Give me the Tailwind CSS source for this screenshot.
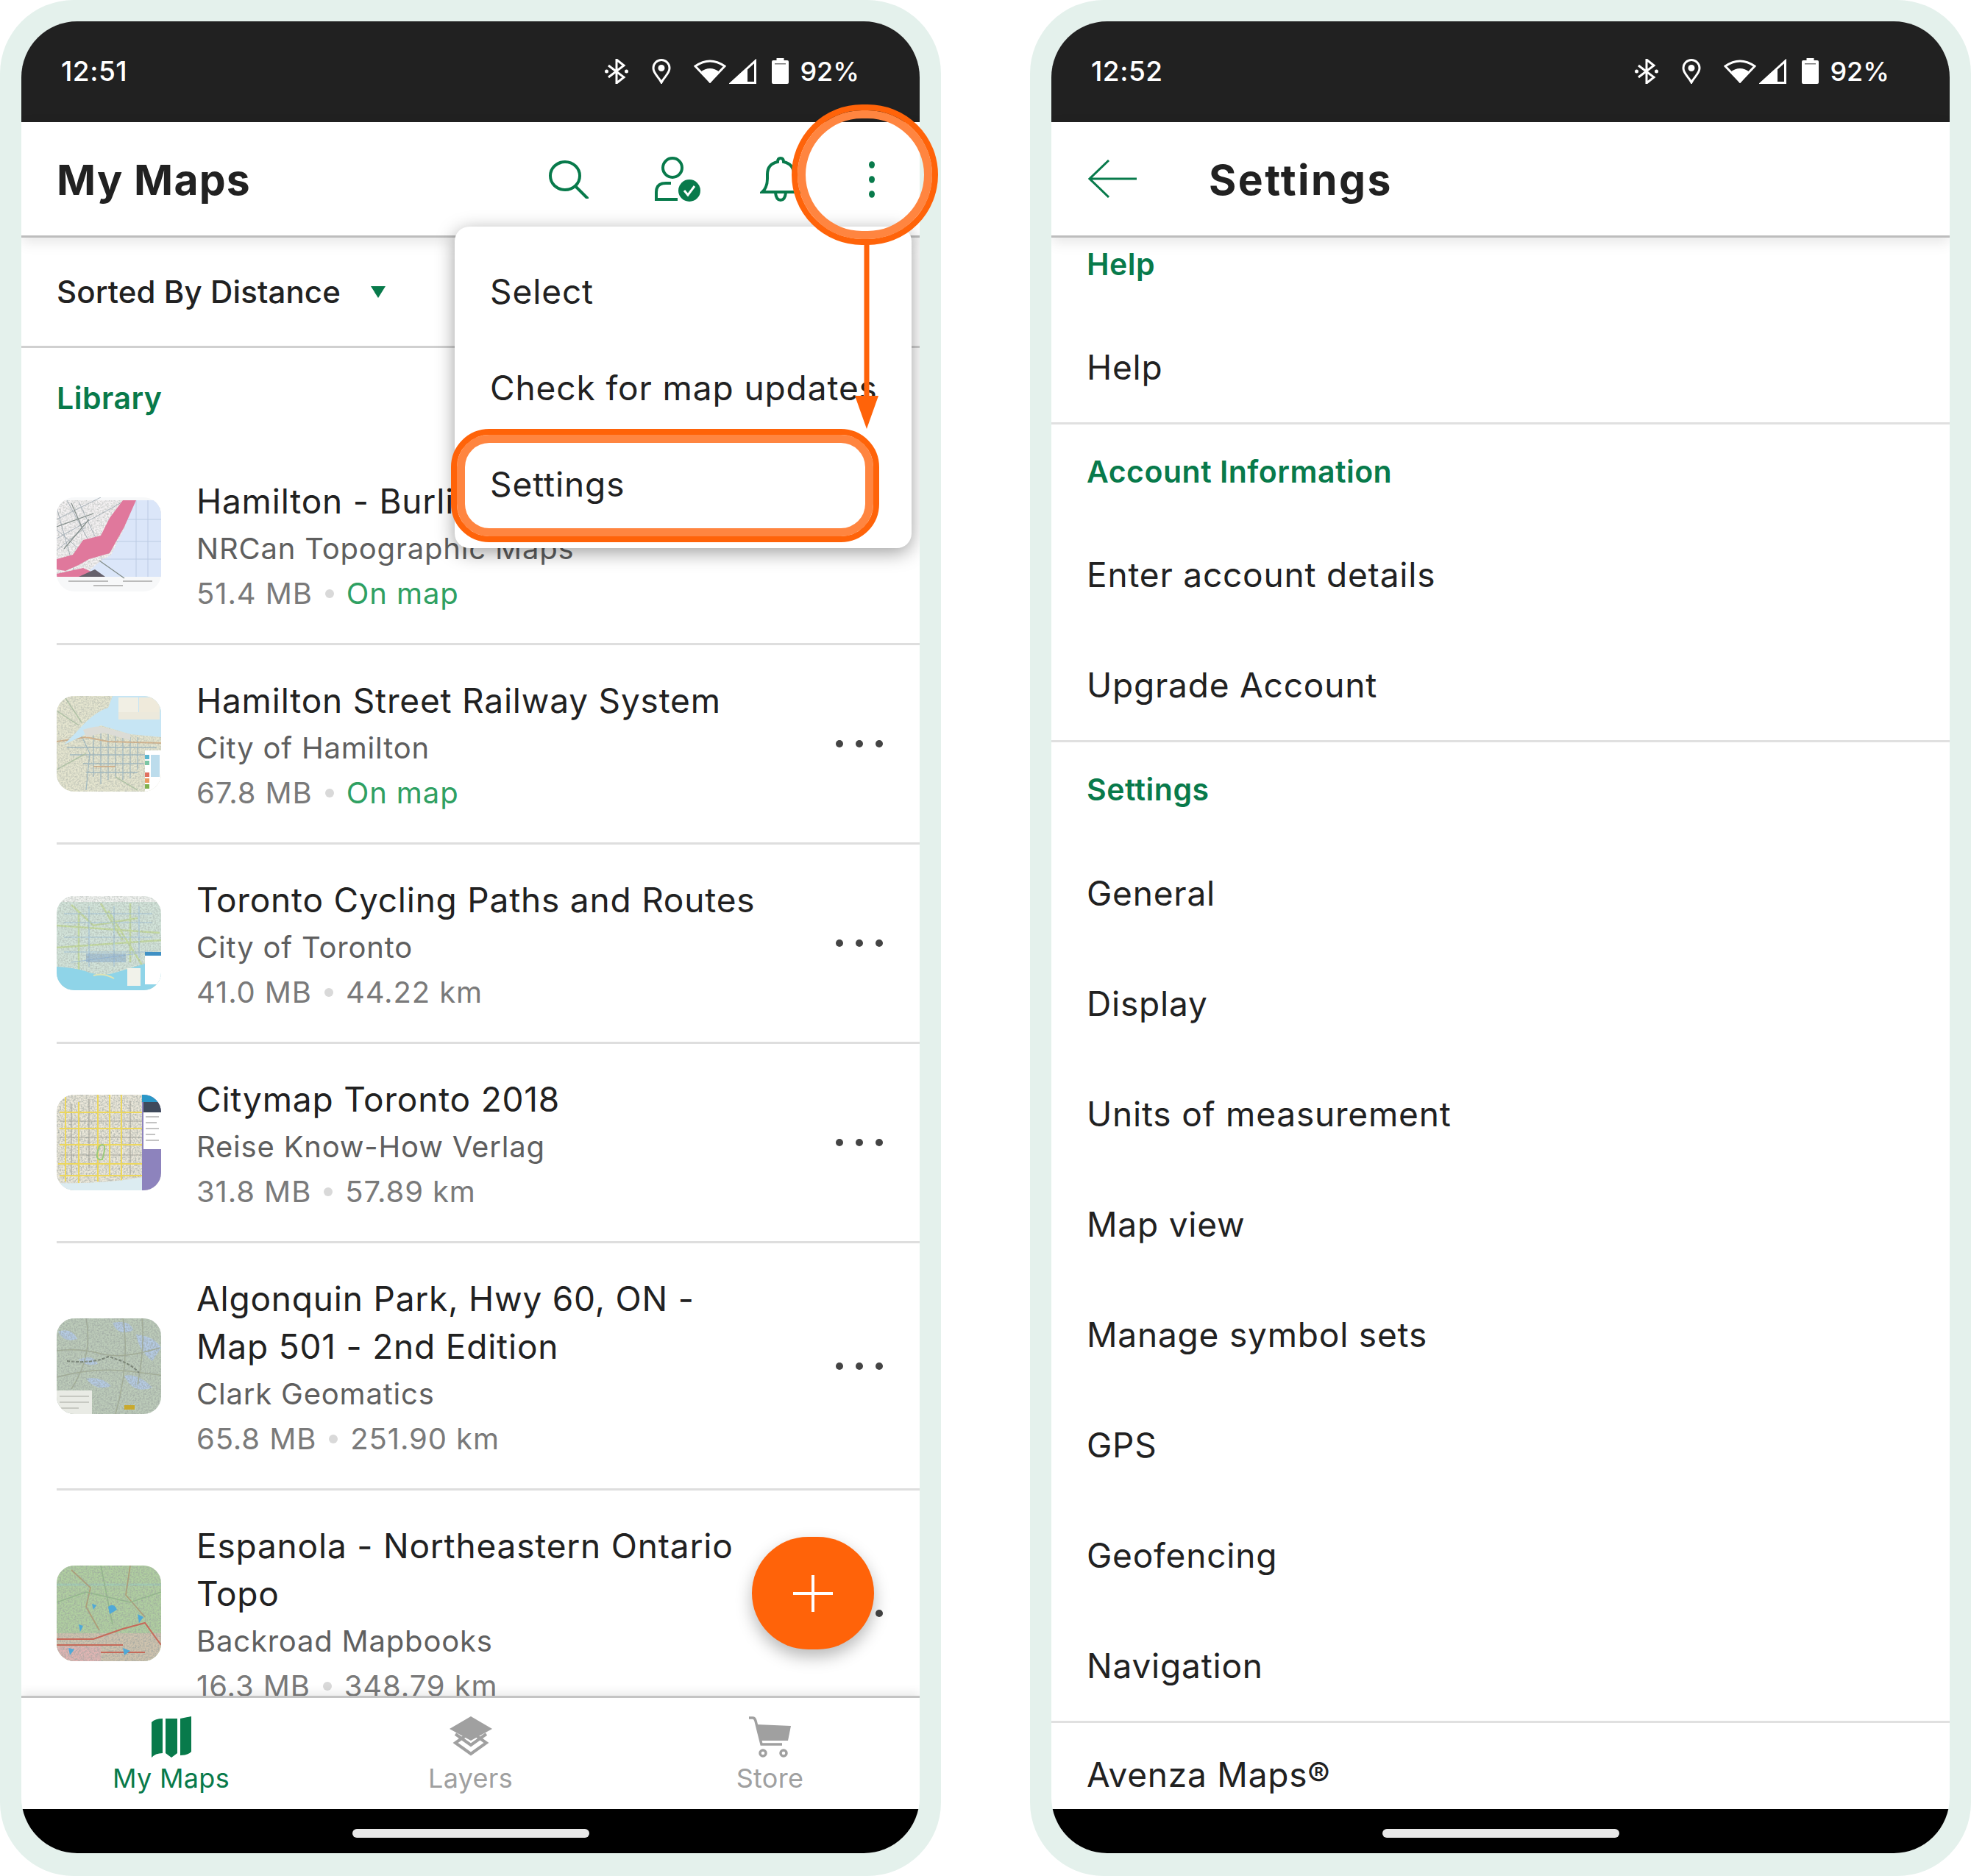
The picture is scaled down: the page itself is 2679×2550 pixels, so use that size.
<!doctype html>
<html lang="en">
<head>
<meta charset="utf-8">
<script src="https://cdn.jsdelivr.net/npm/@tailwindcss/browser@4"></script>
<title>My Maps and Settings</title>
</head>
<body class="bg-white m-0">
<svg class="absolute w-0 h-0" aria-hidden="true"><filter id="n" x="0" y="0" width="100%" height="100%"><feTurbulence type="fractalNoise" baseFrequency="0.45" numOctaves="2" seed="4"/><feColorMatrix values="0 0 0 0 .32  0 0 0 0 .36  0 0 0 0 .34  1.6 0 0 0 -0.58"/></filter></svg>
<div class="w-[2679px] h-[2550px] flex justify-between font-['Inter','Noto_Sans',sans-serif] text-[#212121] overflow-hidden bg-white">

  <!-- LEFT PHONE -->
  <div class="relative w-[1279px] h-[2550px] rounded-[100px] bg-[#e4f1ec] p-[29px] shrink-0">
    <div class="relative w-[1221px] h-[2490px] rounded-[76px] overflow-hidden flex flex-col bg-white">
      <!-- status -->
      <div class="h-[137px] shrink-0 bg-[#212121] flex items-center pl-[54px] pr-[82px] pb-[2px] text-white text-[37px] font-medium tracking-[0.5px]">
        <span>12:51</span>
        <div class="ml-auto flex items-center">
          <svg class="w-[32px] h-[34px]" viewBox="0 0 32 34" fill="none" stroke="#fff" stroke-width="3"><path d="M5 9 L26 25 L16 33 V1 L26 9 L5 25"/><circle cx="2.5" cy="17" r="2.5" fill="#fff" stroke="none"/><circle cx="29.5" cy="17" r="2.5" fill="#fff" stroke="none"/></svg>
          <svg class="w-[26px] h-[34px] ml-[32px]" viewBox="0 0 26 34" fill="none" stroke="#fff" stroke-width="3"><path d="M13 32 C9 24 2 20 2 12.500 A11 11 0 0 1 24 12.500 C24 20 17 24 13 32Z"/><circle cx="13" cy="12.500" r="4.500" fill="#fff" stroke="none"/></svg>
          <svg class="w-[44px] h-[34px] ml-[31px]" viewBox="0 0 44 34" fill="none" stroke="#fff" stroke-width="3"><path d="M22 31 L2 10 Q22 -4 42 10Z"/><path d="M22 33 L9 18 Q22 8 35 18Z" fill="#fff" stroke="none"/></svg>
          <svg class="w-[37px] h-[34px] ml-[4px]" viewBox="0 0 37 34" fill="none" stroke="#fff" stroke-width="3"><path d="M3 32.500 L35.500 3 V32.500Z"/><path d="M0 34 L25 11 V34Z" fill="#fff" stroke="none"/></svg>
          <svg class="w-[23px] h-[35px] ml-[21px]" viewBox="0 0 23 35"><path d="M6.500 0 H16.500 V3 H21 Q23 3 23 5 V33 Q23 35 21 35 H2 Q0 35 0 33 V5 Q0 3 2 3 H6.500Z" fill="#fff"/><rect x="4" y="7" width="15" height="1.500" fill="#777"/></svg>
          <span class="ml-[15px] text-[36px] tracking-normal">92%</span>
        </div>
      </div>
      <!-- header -->
      <div class="relative z-10 h-[157px] shrink-0 bg-white border-b-[3px] border-[#bdbdbd] shadow-[0_6px_18px_rgba(0,0,0,0.10)] flex items-center pl-[48px]">
        <h1 class="pt-[2px] text-[57px] font-bold tracking-[1.200px] leading-none">My Maps</h1>
        <svg class="absolute left-[716px] top-[52px] w-[56px] h-[52px]" viewBox="0 0 56 52" fill="none" stroke="#087a4b" stroke-width="4" stroke-linecap="round"><ellipse cx="23" cy="21" rx="20" ry="19"/><path d="M37 35 L53 51"/></svg>
        <svg class="absolute left-[860px] top-[47px] w-[64px] h-[62px]" viewBox="0 0 64 62" fill="none" stroke="#087a4b" stroke-width="4"><circle cx="25" cy="15" r="13"/><path d="M23 36 H16 Q3 36 3 48 V58 H32"/><circle cx="48" cy="46" r="15" fill="#087a4b" stroke="none"/><path d="M41 46 L46 52 L55 40" stroke="#fff" stroke-width="3"/></svg>
        <svg class="absolute left-[1004px] top-[47px] w-[56px] h-[62px]" viewBox="0 0 56 62" fill="none" stroke="#087a4b" stroke-width="4"><path d="M3 48 Q10 42 10 30 V24 Q10 10 24 7 Q24 2 28 2 Q32 2 32 7 Q46 10 46 24 V30 Q46 42 53 48 Z"/><path d="M21 49 Q22 59 28 59 Q34 59 35 49"/></svg>
        <svg class="absolute left-[1150px] top-[52px] w-[12px] h-[52px]" viewBox="0 0 12 52" fill="#087a4b"><ellipse cx="6" cy="6" rx="4" ry="4.800"/><ellipse cx="6" cy="26" rx="4" ry="4.800"/><ellipse cx="6" cy="46" rx="4" ry="4.800"/></svg>
      </div>
      <!-- content -->
      <div class="flex-1 min-h-0 overflow-hidden">
        <div class="h-[150px] border-b-[3px] border-[#d0d0d0] flex items-center pl-[48px] text-[42px] font-medium tracking-[0.1px]">
          <span>Sorted By Distance</span>
          <svg class="ml-[41px] w-[20px] h-[16px]" viewBox="0 0 20 16"><path d="M0 0 H20 L10 16Z" fill="#087a4b"/></svg>
        </div>
        <div class="h-[133px] flex items-center pl-[48px] pt-[5px] text-[41px] font-semibold text-[#087a4b] tracking-[0.5px]">Library</div>

        <div class="ml-[48px]">
          <!-- row 1 -->
          <div class="flex items-center border-b-[3px] border-[#dedede]">
            <svg class="w-[142px] h-[128px] shrink-0 rounded-[24px]" viewBox="0 0 142 128" preserveAspectRatio="none">
              <rect width="142" height="128" fill="#f7f8f9"/><rect y="4" width="142" height="104" fill="#f5f2f3"/>
              <path d="M0 30 L60 0 M0 56 L90 6 M0 14 L24 100 M30 6 L60 70 M0 72 L40 40 M14 4 L44 60 M0 44 L30 70" stroke="#aab4bd" stroke-width="1" fill="none"/>
              <path d="M0 40 L50 22 M10 70 L44 30 M20 8 L34 40" stroke="#7f8a87" stroke-width="1.200" fill="none"/>
              <rect y="4" width="142" height="104" filter="url(#n)" opacity=".7"/>
              <path d="M106 4 H142 V108 H34 L58 88 L74 78 L92 42Z" fill="#dbe6f9"/>
              <path d="M108 4V108 M124 4V108 M70 30H142 M60 60H142 M60 84H142" stroke="#bccbe4" stroke-width="1" fill="none"/>
              <path d="M90 4 H108 L92 40 L72 76 L44 84 L30 92 L12 100 L0 98 V84 L22 78 L36 58 L60 52 L72 28Z" fill="#e0789c"/>
              <path d="M0 104 L36 96 L62 108 H0Z" fill="#e0789c"/><path d="M30 108 L52 98 L66 108Z" fill="#66616c"/>
              <path d="M58 86 L92 110" stroke="#7f8a87" stroke-width="1.200"/>
              <path d="M16 114 H70 M90 114 H130 M50 120 H90" stroke="#bbb" stroke-width="2"/>
            </svg>
            <div class="ml-[48px] w-[772px] pt-[43px] pb-[38px]">
              <div class="text-[46px] leading-[65px] tracking-[0.8px]">Hamilton - Burlington</div>
              <div class="text-[40px] leading-[63px] text-[#5f5f5f] tracking-[0.8px]">NRCan Topographic Maps</div>
              <div class="text-[40px] leading-[59px] text-[#7a7a7a] tracking-[0.9px] flex items-center"><span>51.4 MB</span><span class="w-[12px] h-[12px] rounded-full bg-[#d9d9d9] mx-[17px]"></span><span class="text-[#2fa062]">On map</span></div>
            </div>
            <svg class="ml-auto mr-[50px] w-[64px] h-[10px] shrink-0" viewBox="0 0 64 10" fill="#444"><circle cx="5" cy="5" r="5"/><circle cx="32" cy="5" r="5"/><circle cx="59" cy="5" r="5"/></svg>
          </div>
          <!-- row 2 -->
          <div class="flex items-center border-b-[3px] border-[#dedede]">
            <svg class="w-[142px] h-[130px] shrink-0 rounded-[24px]" viewBox="0 0 142 130" preserveAspectRatio="none">
              <rect width="142" height="130" fill="#e6e6d0"/>
              <path d="M60 42 V120 M70 46 V114 M80 48 V110 M90 50 V114 M100 56 V112 M110 56 V100 M50 50 V110 M14 70 H136 M18 80 H120 M36 92 H118 M40 104 H110 M30 46 L45 78 L40 128" stroke="#a3bcc4" stroke-width="1.300" fill="none"/>
              <path d="M0 62 L40 56 L70 62 L142 64 M50 96 H80" stroke="#d7b48c" stroke-width="2" fill="none"/>
              <path d="M0 20 L30 40 M10 0 L34 36 M0 100 L40 78 M80 110 L110 128" stroke="#b5c7a8" stroke-width="1.500" fill="none"/>
              <rect width="142" height="130" filter="url(#n)" opacity=".7"/>
              <path d="M26 50 Q50 22 70 16 L76 0 H142 V56 L100 52 L60 40 L32 56 L10 66Z" fill="#c6e5f4"/>
              <path d="M36 46 Q54 40 60 42 L100 52 V60 L64 50 L40 56Z" fill="#dcdcd6"/>
              <rect x="84" y="2" width="27" height="20" fill="#f1efe4"/><rect x="112" y="2" width="28" height="20" fill="#efeadb"/><rect x="84" y="22" width="56" height="10" fill="#ece9dc"/>
              <rect x="120" y="74" width="22" height="56" fill="#fff"/><rect x="120" y="80" width="6" height="6" fill="#5ab6cf"/><rect x="120" y="88" width="6" height="6" fill="#7bc6a4"/><rect x="120" y="104" width="6" height="6" fill="#e0705f"/><rect x="120" y="112" width="6" height="6" fill="#e99a60"/><rect x="120" y="120" width="6" height="6" fill="#7fb14e"/>
              <rect x="128" y="80" width="12" height="30" fill="#bcdcec"/>
            </svg>
            <div class="ml-[48px] w-[772px] pt-[43px] pb-[38px]">
              <div class="text-[46px] leading-[65px] tracking-[0.8px]">Hamilton Street Railway System</div>
              <div class="text-[40px] leading-[63px] text-[#5f5f5f] tracking-[0.8px]">City of Hamilton</div>
              <div class="text-[40px] leading-[59px] text-[#7a7a7a] tracking-[0.9px] flex items-center"><span>67.8 MB</span><span class="w-[12px] h-[12px] rounded-full bg-[#d9d9d9] mx-[17px]"></span><span class="text-[#2fa062]">On map</span></div>
            </div>
            <svg class="ml-auto mr-[50px] w-[64px] h-[10px] shrink-0" viewBox="0 0 64 10" fill="#444"><circle cx="5" cy="5" r="5"/><circle cx="32" cy="5" r="5"/><circle cx="59" cy="5" r="5"/></svg>
          </div>
          <!-- row 3 -->
          <div class="flex items-center border-b-[3px] border-[#dedede]">
            <svg class="w-[142px] h-[128px] shrink-0 rounded-[24px]" viewBox="0 0 142 128" preserveAspectRatio="none">
              <rect width="142" height="128" fill="#d3e4da"/><rect width="142" height="8" fill="#f2f4f1"/>
              <path d="M20 12 L50 40 L110 30 M60 10 L90 60 M0 40 L140 50 M0 70 L142 60 M30 20 V100 M100 10 V90 M70 20 L120 100" stroke="#c6dca0" stroke-width="2.500" fill="none"/>
              <path d="M10 24 H130 M10 36 H130 M10 56 H130 M10 76 H130 M44 14 V96 M78 14 V96 M112 14 V84 M20 90 L110 78" stroke="#a6c6dc" stroke-width="1.200" fill="none"/>
              <path d="M40 78 H94 V90 H40Z" fill="#7fa5d0" opacity=".5"/>
              <rect width="142" height="128" filter="url(#n)" opacity=".7"/>
              <path d="M0 96 Q30 98 44 104 Q64 110 80 104 L120 92 L142 80 V128 H0Z" fill="#8fd4e8"/>
              <path d="M50 108 Q64 104 78 112" stroke="#dfe3b5" stroke-width="2" fill="none"/>
              <rect x="96" y="98" width="18" height="24" fill="#f1f2ea"/><rect x="120" y="76" width="22" height="44" fill="#fff"/><rect x="120" y="76" width="22" height="5" fill="#3f90c4"/>
            </svg>
            <div class="ml-[48px] w-[772px] pt-[43px] pb-[38px]">
              <div class="text-[46px] leading-[65px] tracking-[0.8px]">Toronto Cycling Paths and Routes</div>
              <div class="text-[40px] leading-[63px] text-[#5f5f5f] tracking-[0.8px]">City of Toronto</div>
              <div class="text-[40px] leading-[59px] text-[#7a7a7a] tracking-[0.9px] flex items-center"><span>41.0 MB</span><span class="w-[12px] h-[12px] rounded-full bg-[#d9d9d9] mx-[17px]"></span><span>44.22 km</span></div>
            </div>
            <svg class="ml-auto mr-[50px] w-[64px] h-[10px] shrink-0" viewBox="0 0 64 10" fill="#444"><circle cx="5" cy="5" r="5"/><circle cx="32" cy="5" r="5"/><circle cx="59" cy="5" r="5"/></svg>
          </div>
          <!-- row 4 -->
          <div class="flex items-center border-b-[3px] border-[#dedede]">
            <svg class="w-[142px] h-[130px] shrink-0 rounded-[24px]" viewBox="0 0 142 130" preserveAspectRatio="none">
              <rect width="142" height="130" fill="#ece8da"/>
              <path d="M20 12 V110 M44 6 V100 M100 8 V110 M4 36 H116 M4 58 H116 M4 82 H116" stroke="#a9a59b" stroke-width="1.200" fill="none"/>
              <rect width="142" height="130" filter="url(#n)"/>
              <path d="M12 0 V118 M30 10 V122 M56 0 V118 M72 0 V110 M88 0 V118 M4 24 H118 M4 46 H118 M4 68 H118 M2 94 H118 M4 110 H118" stroke="#ecd75e" stroke-width="2" fill="none"/>
              <path d="M0 120 Q60 122 118 112 V130 H0Z" fill="#dcecf1"/><path d="M58 70 Q70 62 62 88 Q50 90 58 70Z" fill="none" stroke="#9ac97a" stroke-width="2"/>
              <rect x="116" width="26" height="130" fill="#8d83bd"/><rect x="116" width="26" height="10" fill="#2a97c7"/><rect x="118" y="10" width="24" height="14" fill="#3f4a5c"/><rect x="118" y="24" width="24" height="50" fill="#fff"/>
              <path d="M121 30 H139 M121 38 H136 M121 46 H139 M121 54 H134 M121 62 H139" stroke="#888" stroke-width="1.200"/>
            </svg>
            <div class="ml-[48px] w-[772px] pt-[43px] pb-[38px]">
              <div class="text-[46px] leading-[65px] tracking-[0.8px]">Citymap Toronto 2018</div>
              <div class="text-[40px] leading-[63px] text-[#5f5f5f] tracking-[0.8px]">Reise Know-How Verlag</div>
              <div class="text-[40px] leading-[59px] text-[#7a7a7a] tracking-[0.9px] flex items-center"><span>31.8 MB</span><span class="w-[12px] h-[12px] rounded-full bg-[#d9d9d9] mx-[17px]"></span><span>57.89 km</span></div>
            </div>
            <svg class="ml-auto mr-[50px] w-[64px] h-[10px] shrink-0" viewBox="0 0 64 10" fill="#444"><circle cx="5" cy="5" r="5"/><circle cx="32" cy="5" r="5"/><circle cx="59" cy="5" r="5"/></svg>
          </div>
          <!-- row 5 -->
          <div class="flex items-center border-b-[3px] border-[#dedede]">
            <svg class="w-[142px] h-[130px] shrink-0 rounded-[24px]" viewBox="0 0 142 130" preserveAspectRatio="none">
              <rect width="142" height="130" fill="#bccbb9"/>
              <path d="M76 6 Q100 2 104 16 Q84 26 76 6Z M108 22 Q132 24 142 40 L130 58 Q112 44 108 22Z M2 18 Q20 12 28 28 Q10 34 2 18Z M40 82 Q60 78 74 92 Q54 100 40 82Z M92 78 Q110 74 130 94 Q104 104 92 78Z M30 56 Q50 48 56 62 Q40 66 30 56Z" fill="#b5cbe4"/>
              <path d="M0 44 Q30 40 60 48 T140 40 M0 80 Q50 66 100 72 T142 78 M40 0 Q50 50 20 96 M90 0 Q100 60 80 130 M116 0 Q120 40 110 90" stroke="#a3ad95" stroke-width="1.500" fill="none"/>
              <path d="M14 58 Q50 62 70 52 Q100 60 112 74" stroke="#717c6c" stroke-width="2" stroke-dasharray="4 2" fill="none"/>
              <rect width="142" height="130" filter="url(#n)"/>
              <rect x="0" y="98" width="48" height="32" fill="#e9ebe5"/><path d="M4 106 H44 M4 114 H44 M4 122 H30" stroke="#a5a79f"/>
              <rect x="92" y="118" width="14" height="6" fill="#c9a92d"/>
            </svg>
            <div class="ml-[48px] w-[772px] pt-[43px] pb-[38px]">
              <div class="text-[46px] leading-[65px] tracking-[0.8px]">Algonquin Park, Hwy 60, ON - Map 501 - 2nd Edition</div>
              <div class="text-[40px] leading-[63px] text-[#5f5f5f] tracking-[0.8px]">Clark Geomatics</div>
              <div class="text-[40px] leading-[59px] text-[#7a7a7a] tracking-[0.9px] flex items-center"><span>65.8 MB</span><span class="w-[12px] h-[12px] rounded-full bg-[#d9d9d9] mx-[17px]"></span><span>251.90 km</span></div>
            </div>
            <svg class="ml-auto mr-[50px] w-[64px] h-[10px] shrink-0" viewBox="0 0 64 10" fill="#444"><circle cx="5" cy="5" r="5"/><circle cx="32" cy="5" r="5"/><circle cx="59" cy="5" r="5"/></svg>
          </div>
          <!-- row 6 -->
          <div class="flex items-center">
            <svg class="w-[142px] h-[130px] shrink-0 rounded-[24px]" viewBox="0 0 142 130" preserveAspectRatio="none">
              <rect width="142" height="130" fill="#b0cfa0"/><rect y="92" width="142" height="38" fill="#cfc3ae"/><rect x="0" y="110" width="60" height="20" fill="#e0b5b3"/>
              <path d="M0 26 H142" stroke="#a3cdb4" stroke-width="3"/>
              <path d="M20 6 L46 30 L40 56 L58 88 M100 0 L94 40 L120 70" stroke="#b09c72" stroke-width="1.800" fill="none"/>
              <path d="M0 50 L40 36 L100 50 L142 36 M60 0 L76 80" stroke="#92ba88" stroke-width="1.500" fill="none"/>
              <rect width="142" height="130" filter="url(#n)"/>
              <path d="M0 100 H50 L90 86 L120 78 L136 100 L142 108 M0 108 H90 M60 118 H120" stroke="#c66a5a" stroke-width="2" fill="none"/>
              <path d="M70 56 Q78 50 82 60 L72 66Z M30 80 L36 82 L32 90Z M110 66 L118 70 L112 78Z M16 112 L24 114 L18 122Z M90 112 L100 116 L92 122Z M48 52 L54 54 L50 60Z" fill="#4fa9d8"/>
            </svg>
            <div class="ml-[48px] w-[772px] pt-[43px] pb-[38px]">
              <div class="text-[46px] leading-[65px] tracking-[0.8px]">Espanola - Northeastern Ontario Topo</div>
              <div class="text-[40px] leading-[63px] text-[#5f5f5f] tracking-[0.8px]">Backroad Mapbooks</div>
              <div class="text-[40px] leading-[59px] text-[#7a7a7a] tracking-[0.9px] flex items-center"><span>16.3 MB</span><span class="w-[12px] h-[12px] rounded-full bg-[#d9d9d9] mx-[17px]"></span><span>348.79 km</span></div>
            </div>
            <svg class="ml-auto mr-[50px] w-[64px] h-[10px] shrink-0" viewBox="0 0 64 10" fill="#444"><circle cx="5" cy="5" r="5"/><circle cx="32" cy="5" r="5"/><circle cx="59" cy="5" r="5"/></svg>
          </div>
        </div>
      </div>
      <!-- nav -->
      <div class="relative z-10 h-[154px] shrink-0 bg-white border-t-[3px] border-[#c4c4c4] shadow-[0_-5px_12px_rgba(0,0,0,0.08)] grid grid-cols-3 text-[36px] tracking-[0.3px] text-[#a0a0a0]">
        <div class="flex flex-col items-center pt-[25px] text-[#087a4b]">
          <svg class="w-[54px] h-[56px]" viewBox="0 0 54 56" fill="#087a4b"><path d="M15 3 Q5 3 0 8 V56 Q5 50 15 50Z M19 3 L35 3 V50 L27 56 L19 50Z M39 3 L54 0 V48 Q50 53 39 53Z"/></svg>
          <span class="mt-[6px] leading-[44px]">My Maps</span>
        </div>
        <div class="flex flex-col items-center pt-[25px]">
          <svg class="w-[58px] h-[56px]" viewBox="0 0 58 56" fill="none" stroke="#a0a0a0" stroke-width="4"><path d="M8 36 L29 51 L50 36 L29 21Z"/><path d="M8 24 L29 39 L50 24"/><path d="M29 0 L58 17 L29 33 L0 17Z" fill="#a0a0a0" stroke="none"/></svg>
          <span class="mt-[6px] leading-[44px]">Layers</span>
        </div>
        <div class="flex flex-col items-center pt-[25px]">
          <svg class="w-[60px] h-[56px]" viewBox="0 0 60 56" fill="none" stroke="#a0a0a0" stroke-width="3.500"><path d="M1 2 H6 Q9 2 10 6 L18 38 H46"/><path d="M12 11 L58 13 L54 33 L18 33Z" fill="#a0a0a0" stroke="none"/><circle cx="20" cy="50" r="4"/><circle cx="48" cy="50" r="4"/></svg>
          <span class="mt-[6px] leading-[44px]">Store</span>
        </div>
      </div>
      <!-- android bar -->
      <div class="relative z-10 h-[60px] shrink-0 bg-black flex justify-center pt-[27px]">
        <div class="w-[322px] h-[12px] rounded-full bg-[#e8e8e8]"></div>
      </div>
      <!-- FAB -->
      <div class="absolute z-20 left-[993px] top-[2060px] w-[166px] h-[153px] rounded-full bg-[#ff6309] shadow-[0_10px_22px_rgba(0,0,0,0.28)] flex items-center justify-center">
        <svg class="w-[54px] h-[50px]" viewBox="0 0 54 50" stroke="#fff" stroke-width="4"><path d="M27 0 V50 M0 25 H54"/></svg>
      </div>
      <!-- menu -->
      <div class="absolute z-30 left-[589px] top-[279px] w-[621px] h-[437px] rounded-[20px] bg-white shadow-[0_6px_26px_rgba(0,0,0,0.38)] flex flex-col pt-[23px] pl-[48px] text-[46px] tracking-[0.9px]">
        <div class="h-[131px] flex items-center">Select</div>
        <div class="h-[131px] flex items-center">Check for map updates</div>
        <div class="h-[131px] flex items-center">Settings</div>
      </div>
    </div>
    <!-- annotations -->
    <div class="absolute z-40 left-[613px] top-[583px] w-[582px] h-[154px] rounded-[52px] border-[8px] border-[#ff6309] shadow-[inset_0_0_0_11px_#ff8540]"></div>
    <div class="absolute z-40 left-[1076px] top-[142px] w-[199px] h-[191px] rounded-full border-[8px] border-[#ff6309] shadow-[inset_0_0_0_11px_#ff8540]"></div>
    <svg class="absolute z-40 left-[1160px] top-[330px] w-[36px] h-[253px]" viewBox="0 0 36 253"><path d="M18 0 V215" stroke="#ff6309" stroke-width="7"/><path d="M2 208 H34 L18 253Z" fill="#ff6309"/></svg>
  </div>

  <!-- RIGHT PHONE -->
  <div class="relative w-[1279px] h-[2550px] rounded-[100px] bg-[#e4f1ec] p-[29px] shrink-0">
    <div class="relative w-[1221px] h-[2490px] rounded-[76px] overflow-hidden flex flex-col bg-white">
      <div class="h-[137px] shrink-0 bg-[#212121] flex items-center pl-[54px] pr-[82px] pb-[2px] text-white text-[37px] font-medium tracking-[0.5px]">
        <span>12:52</span>
        <div class="ml-auto flex items-center">
          <svg class="w-[32px] h-[34px]" viewBox="0 0 32 34" fill="none" stroke="#fff" stroke-width="3"><path d="M5 9 L26 25 L16 33 V1 L26 9 L5 25"/><circle cx="2.5" cy="17" r="2.5" fill="#fff" stroke="none"/><circle cx="29.5" cy="17" r="2.5" fill="#fff" stroke="none"/></svg>
          <svg class="w-[26px] h-[34px] ml-[32px]" viewBox="0 0 26 34" fill="none" stroke="#fff" stroke-width="3"><path d="M13 32 C9 24 2 20 2 12.500 A11 11 0 0 1 24 12.500 C24 20 17 24 13 32Z"/><circle cx="13" cy="12.500" r="4.500" fill="#fff" stroke="none"/></svg>
          <svg class="w-[44px] h-[34px] ml-[31px]" viewBox="0 0 44 34" fill="none" stroke="#fff" stroke-width="3"><path d="M22 31 L2 10 Q22 -4 42 10Z"/><path d="M22 33 L9 18 Q22 8 35 18Z" fill="#fff" stroke="none"/></svg>
          <svg class="w-[37px] h-[34px] ml-[4px]" viewBox="0 0 37 34" fill="none" stroke="#fff" stroke-width="3"><path d="M3 32.500 L35.500 3 V32.500Z"/><path d="M0 34 L25 11 V34Z" fill="#fff" stroke="none"/></svg>
          <svg class="w-[23px] h-[35px] ml-[21px]" viewBox="0 0 23 35"><path d="M6.500 0 H16.500 V3 H21 Q23 3 23 5 V33 Q23 35 21 35 H2 Q0 35 0 33 V5 Q0 3 2 3 H6.500Z" fill="#fff"/><rect x="4" y="7" width="15" height="1.500" fill="#777"/></svg>
          <span class="ml-[15px] text-[36px] tracking-normal">92%</span>
        </div>
      </div>
      <div class="relative z-10 h-[157px] shrink-0 bg-white border-b-[3px] border-[#bdbdbd] shadow-[0_6px_18px_rgba(0,0,0,0.10)] flex items-center pl-[50px]">
        <svg class="w-[66px] h-[52px]" viewBox="0 0 66 52" fill="none" stroke="#087a4b" stroke-width="3"><path d="M66 26 H2 M28 1 L2 26 L28 51"/></svg>
        <h1 class="ml-[98px] pt-[2px] text-[57px] font-bold tracking-[2.500px] leading-none">Settings</h1>
      </div>
      <div class="flex-1 min-h-0 overflow-hidden text-[46px] tracking-[0.8px]">
        <div class="h-[101px] flex items-start pt-[13px] pl-[48px] text-[41px] font-semibold text-[#087a4b] tracking-[0.5px] leading-[46px]">Help</div>
        <div class="h-[150px] flex items-center pl-[48px]">Help</div>
        <div class="border-t-[3px] border-[#e0e0e0]">
          <div class="h-[129px] flex items-center pl-[48px] text-[41px] font-semibold text-[#087a4b] tracking-[0.5px]">Account Information</div>
          <div class="h-[150px] flex items-center pl-[48px]">Enter account details</div>
          <div class="h-[150px] flex items-center pl-[48px]">Upgrade Account</div>
        </div>
        <div class="border-t-[3px] border-[#e0e0e0]">
          <div class="h-[130px] flex items-center pl-[48px] text-[41px] font-semibold text-[#087a4b] tracking-[0.5px]">Settings</div>
          <div class="h-[150px] flex items-center pl-[48px]">General</div>
          <div class="h-[150px] flex items-center pl-[48px]">Display</div>
          <div class="h-[150px] flex items-center pl-[48px]">Units of measurement</div>
          <div class="h-[150px] flex items-center pl-[48px]">Map view</div>
          <div class="h-[150px] flex items-center pl-[48px]">Manage symbol sets</div>
          <div class="h-[150px] flex items-center pl-[48px]">GPS</div>
          <div class="h-[150px] flex items-center pl-[48px]">Geofencing</div>
          <div class="h-[150px] flex items-center pl-[48px]">Navigation</div>
        </div>
        <div class="border-t-[3px] border-[#e0e0e0] pl-[48px] pt-[38px]">
          <div class="leading-[65px]">Avenza Maps®</div>
          <div class="text-[40px] leading-[63px] text-[#5f5f5f] tracking-[0.8px]">Version 5.1.1 (3421) - Avenza Systems Inc</div>
        </div>
      </div>
      <div class="relative z-10 h-[60px] shrink-0 bg-black flex justify-center pt-[27px]">
        <div class="w-[322px] h-[12px] rounded-full bg-[#e8e8e8]"></div>
      </div>
    </div>
  </div>
</div>
</body>
</html>
